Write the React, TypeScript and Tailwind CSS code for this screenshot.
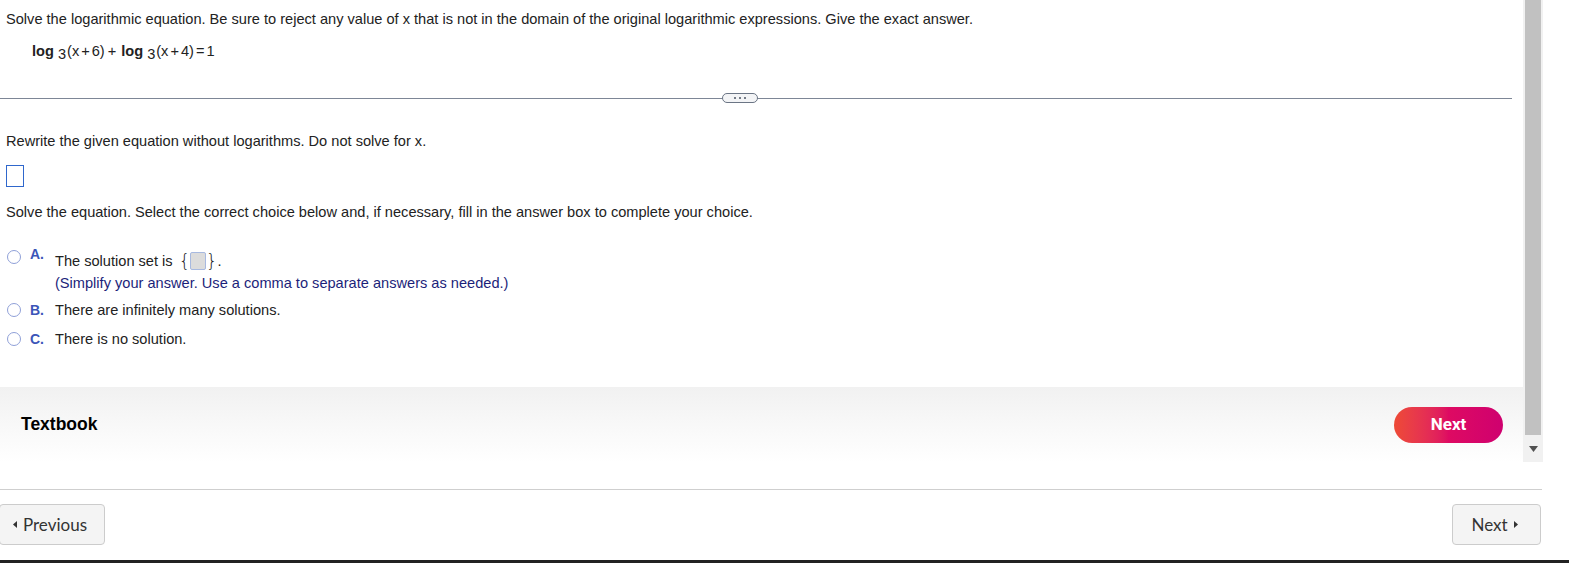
export default function App() {
  const choiceLetter = "font-bold text-[#3b55b8] w-[25px] shrink-0";
  const radio = "w-[14px] h-[14px] rounded-full border-[1.5px] border-[#8fa0d8] shrink-0";
  return (
    <div className="w-[1569px] h-[563px] bg-white overflow-hidden relative font-['Liberation_Sans',Arial,sans-serif] text-[14.6px] text-[#222]">
      <div className="flex h-[462px]">
        {/* question area */}
        <div className="w-[1523px] flex flex-col">
          <div className="pl-[6px] pt-[10px] h-[98px]">
            <p className="leading-[18px]">
              Solve the logarithmic equation. Be sure to reject any value of x that is not in the domain of the original logarithmic expressions. Give the exact answer.
            </p>
            <p className="mt-[14px] ml-[26px] leading-[18px]">
              <b>log</b>
              <sub className="text-[14.6px] relative top-[3px] ml-[4px] mr-[1px]">3</sub>
              (x<span className="mx-[2px]">+</span>6)<span className="ml-[3px] mr-[5px]">+</span>
              <b>log</b>
              <sub className="text-[14.6px] relative top-[3px] ml-[4px] mr-[1px]">3</sub>
              (x<span className="mx-[2px]">+</span>4)<span className="mx-[2px]">=</span>1
            </p>
          </div>

          {/* divider */}
          <div className="relative w-[1512px] h-px bg-[#7d8696]">
            <div className="absolute left-[722px] top-[-5px] w-[36px] h-[10px] rounded-full border border-[#6b7585] bg-[#f3f4f6] flex items-center justify-center gap-[3px]">
              <span className="w-[2px] h-[2px] bg-[#4b5563] rounded-full" />
              <span className="w-[2px] h-[2px] bg-[#4b5563] rounded-full" />
              <span className="w-[2px] h-[2px] bg-[#4b5563] rounded-full" />
            </div>
          </div>

          <div className="pl-[6px]">
            <p className="mt-[33px] leading-[18px]">Rewrite the given equation without logarithms. Do not solve for x.</p>
            <div className="mt-[15px] w-[18px] h-[22px] border border-[#2f67cc]" />
            <p className="mt-[16px] leading-[18px]">
              Solve the equation. Select the correct choice below and, if necessary, fill in the answer box to complete your choice.
            </p>

            <div className="mt-[31px] flex flex-col">
              <div className="flex items-start">
                <span className={radio + " ml-[1px] mt-[-2px]"} />
                <span className={choiceLetter + " ml-[9px] text-[14px] leading-[14px] mt-[-5px]"}>A.</span>
                <div className="flex flex-col">
                  <div className="flex items-center leading-[18px]">
                    <span>The solution set is</span>
                    <span className="ml-[6px] text-[18px] leading-none font-['DejaVu_Sans',sans-serif] font-light">{"{"}</span>
                    <span className="w-[16px] h-[18px] bg-[#dcdcdc] border border-[#a7b9e0] rounded-[2px]" />
                    <span className="text-[18px] leading-none font-['DejaVu_Sans',sans-serif] font-light">{"}"}</span>
                    <span>.</span>
                  </div>
                  <span className="text-[#1c1f7a] leading-[18px] mt-[4px]">
                    (Simplify your answer. Use a comma to separate answers as needed.)
                  </span>
                </div>
              </div>
              <div className="flex items-center mt-[9px] leading-[18px]">
                <span className={radio + " ml-[1px]"} />
                <span className={choiceLetter + " ml-[9px] text-[14px]"}>B.</span>
                <span>There are infinitely many solutions.</span>
              </div>
              <div className="flex items-center mt-[11px] leading-[18px]">
                <span className={radio + " ml-[1px]"} />
                <span className={choiceLetter + " ml-[9px] text-[14px]"}>C.</span>
                <span>There is no solution.</span>
              </div>
            </div>
          </div>

          {/* footer band */}
          <div className="mt-auto h-[75px] bg-gradient-to-b from-[#f1f1f1] to-white flex items-center justify-between pl-[21px] pr-[20px]">
            <span className="font-bold text-[17.5px] text-black">Textbook</span>
            <button className="w-[109px] h-[36px] rounded-full bg-gradient-to-r from-[#ee4a35] via-[#de0a62] to-[#cf006f] text-white font-['Roboto',sans-serif] font-bold text-[17px]">
              Next
            </button>
          </div>
        </div>

        {/* scrollbar */}
        <div className="w-[20px] bg-[#f1f1f1] flex flex-col">
          <div className="mx-[2px] h-[435px] bg-[#c1c1c1]" />
          <div className="flex-1 flex items-center justify-center">
            <svg width="9" height="6" viewBox="0 0 9 6">
              <path d="M0 0h9L4.5 6z" fill="#505050" />
            </svg>
          </div>
        </div>
      </div>

      {/* bottom nav */}
      <div className="mt-[27px] w-[1542px] h-px bg-[#cfcfcf]" />
      <div className="flex justify-between w-[1541px] mt-[14px] font-['Lato',sans-serif] text-[17px] text-[#333]">
        <button className="ml-[-1px] w-[106px] h-[41px] bg-[#f4f4f4] border border-[#cccccc] rounded-[4px] flex items-center justify-center gap-[6px] pr-[4px]">
          <svg width="4" height="7" viewBox="0 0 4 7"><path d="M4 0v7L0 3.5z" fill="#333" /></svg>
          <span>Previous</span>
        </button>
        <button className="w-[89px] h-[41px] bg-[#f4f4f4] border border-[#cccccc] rounded-[4px] flex items-center justify-center gap-[6px] pr-[4px]">
          <span>Next</span>
          <svg width="4" height="7" viewBox="0 0 4 7"><path d="M0 0v7l4-3.5z" fill="#333" /></svg>
        </button>
      </div>
      <div className="absolute left-0 bottom-0 w-full h-[3px] bg-[#222]" />
    </div>
  );
}
